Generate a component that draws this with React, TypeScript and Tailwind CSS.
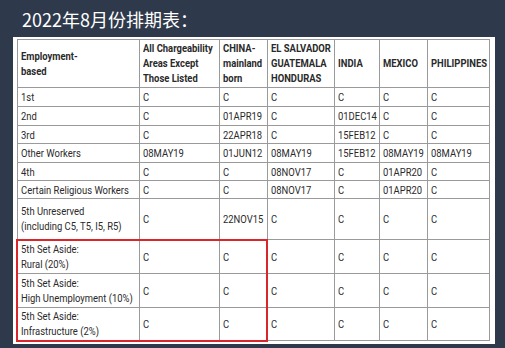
import React from 'react';

type Row = { label: string[]; cells: string[]; h: string; red?: 'top' | 'mid' | 'bottom' };

const rows: Row[] = [
  { label: ['1st'], cells: ['C', 'C', 'C', 'C', 'C', 'C'], h: 'h-[19px]' },
  { label: ['2nd'], cells: ['C', '01APR19', 'C', '01DEC14', 'C', 'C'], h: 'h-[19px]' },
  { label: ['3rd'], cells: ['C', '22APR18', 'C', '15FEB12', 'C', 'C'], h: 'h-[18px]' },
  { label: ['Other Workers'], cells: ['08MAY19', '01JUN12', '08MAY19', '15FEB12', '08MAY19', '08MAY19'], h: 'h-[19px]' },
  { label: ['4th'], cells: ['C', 'C', '08NOV17', 'C', '01APR20', 'C'], h: 'h-[18px]' },
  { label: ['Certain Religious Workers'], cells: ['C', 'C', '08NOV17', 'C', '01APR20', 'C'], h: 'h-[18px]' },
  { label: ['5th Unreserved', '(including C5, T5, I5, R5)'], cells: ['C', '22NOV15', 'C', 'C', 'C', 'C'], h: 'h-[41px]' },
  { label: ['5th Set Aside:', 'Rural (20%)'], cells: ['C', 'C', 'C', 'C', 'C', 'C'], h: 'h-[34px]', red: 'top' },
  { label: ['5th Set Aside:', 'High Unemployment (10%)'], cells: ['C', 'C', 'C', 'C', 'C', 'C'], h: 'h-[34px]', red: 'mid' },
  { label: ['5th Set Aside:', 'Infrastructure (2%)'], cells: ['C', 'C', 'C', 'C', 'C', 'C'], h: 'h-[33px]', red: 'bottom' },
];

const headers = [
  ['Employment-', 'based'],
  ['All Chargeability', 'Areas Except', 'Those Listed'],
  ['CHINA-', 'mainland', 'born'],
  ['EL SALVADOR', 'GUATEMALA', 'HONDURAS'],
  ['INDIA'],
  ['MEXICO'],
  ['PHILIPPINES'],
];

const widths = ['w-[122px]', 'w-[80px]', 'w-[48px]', 'w-[67px]', 'w-[45px]', 'w-[48px]', 'w-[62px]'];

const redClass = (row: Row, col: number) => {
  if (!row.red || col > 2) return '';
  let c = '';
  if (col === 0) c += ' border-l-2 border-l-[#d9262b]';
  if (col === 2) c += ' border-r-2 border-r-[#d9262b]';
  if (row.red === 'top') c += ' border-t-2 border-t-[#d9262b]';
  if (row.red === 'bottom') c += ' border-b-2 border-b-[#d9262b]';
  return c;
};

// Roboto squeezed to look like the condensed face in the screenshot
const Narrow = ({ children }: { children: React.ReactNode }) => (
  <span className="inline-block origin-left scale-x-[0.82] whitespace-nowrap">{children}</span>
);

const App = () => {
  return (
    <div className="w-[505px] h-[348px] bg-[#2e394b] overflow-hidden">
      <div className="h-[37px] pl-[22px] pt-[8px] text-white text-[18px] leading-[22px] font-['Noto_Sans_CJK_SC','Noto_Sans',sans-serif]">
        2022年8月份排期表：
      </div>
      <div className="ml-[13px] w-[482px] bg-white pl-[3px] pr-[7px] pt-[2px] pb-[2px]">
        <table className="border-collapse table-fixed w-[472px] text-[11.5px] leading-[14px] text-[#2a2a2a] font-['Roboto',sans-serif]">
          <thead>
            <tr className="h-[48px]">
              {headers.map((lines, i) => (
                <th
                  key={i}
                  className={`${widths[i]} border border-[#9a9a9a] px-[3px] text-left align-middle font-bold`}
                >
                  {lines.map((l, j) => (
                    <div key={j} className="leading-[15px]">
                      <Narrow>{l}</Narrow>
                    </div>
                  ))}
                </th>
              ))}
            </tr>
          </thead>
          <tbody>
            {rows.map((row, r) => (
              <tr key={r} className={row.h}>
                <td className={`border border-[#9a9a9a] px-[3px] align-middle${redClass(row, 0)}`}>
                  {row.label.map((l, j) => (
                    <div key={j} className={row.label.length > 1 ? 'leading-[15px]' : ''}>
                      <Narrow>{l}</Narrow>
                    </div>
                  ))}
                </td>
                {row.cells.map((c, i) => (
                  <td key={i} className={`border border-[#9a9a9a] px-[3px] align-middle${redClass(row, i + 1)}`}>
                    <Narrow>{c}</Narrow>
                  </td>
                ))}
              </tr>
            ))}
          </tbody>
        </table>
      </div>
    </div>
  );
};

export default App;
